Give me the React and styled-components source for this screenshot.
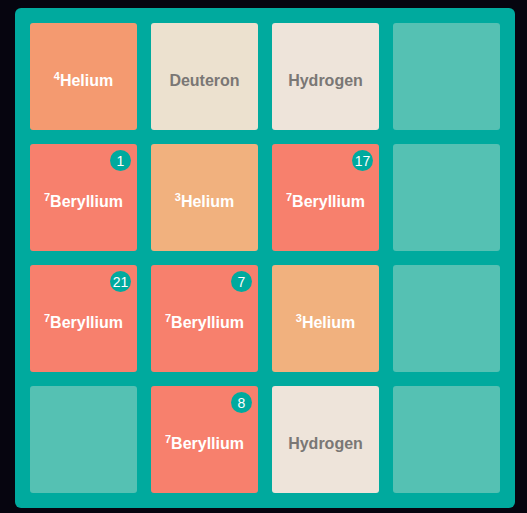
import React from 'react';
import styled, { createGlobalStyle } from 'styled-components';

const GlobalStyle = createGlobalStyle`
    html, body {
        margin: 0;
        padding: 0;
        height: 100%;
    }
    body {
        background-color: #06050f;
        background-image:
            radial-gradient(1px 1px at 20px 30px, #8c8ca8 50%, transparent 51%),
            radial-gradient(1px 1px at 75px 12px, #6f6f90 50%, transparent 51%),
            radial-gradient(1.5px 1.5px at 140px 70px, #aaaacc 50%, transparent 51%),
            radial-gradient(1px 1px at 190px 5px, #7a7a9a 50%, transparent 51%),
            radial-gradient(1px 1px at 10px 110px, #555577 50%, transparent 51%),
            radial-gradient(1px 1px at 105px 95px, #666688 50%, transparent 51%);
        background-size: 211px 127px;
        font-family: 'Liberation Sans', Arial, sans-serif;
    }
`;

const Page = styled.div`
    padding: 8px 0 0 15px;
`;

const Board = styled.div`
    width: 500px;
    height: 500px;
    box-sizing: border-box;
    padding: 15px;
    background: #00aa9e;
    border-radius: 6px;
    display: grid;
    grid-template-columns: repeat(4, 107px);
    grid-template-rows: repeat(4, 107px);
    gap: 14px;
`;

const palette = {
    empty: { bg: '#55c1b3', fg: 'transparent' },
    he4: { bg: '#f49a70', fg: '#ffffff' },
    he3: { bg: '#f1b17e', fg: '#ffffff' },
    be7: { bg: '#f7806d', fg: '#ffffff' },
    d: { bg: '#ece1cf', fg: '#7a7775' },
    h: { bg: '#eee4da', fg: '#7a7775' },
};

const Tile = styled.div`
    position: relative;
    border-radius: 3px;
    background: ${({ $kind }) => palette[$kind].bg};
    color: ${({ $kind }) => palette[$kind].fg};
    display: flex;
    align-items: center;
    justify-content: center;
    font-weight: bold;
    font-size: 16px;
    padding-top: 8px;
    box-sizing: border-box;
`;

const Sup = styled.sup`
    font-size: 11px;
    vertical-align: 6px;
    line-height: 0;
`;

const Badge = styled.span`
    position: absolute;
    top: 6px;
    right: 6px;
    width: 21px;
    height: 21px;
    border-radius: 50%;
    background: #00aa9e;
    color: #ffffff;
    font-size: 14px;
    font-weight: normal;
    display: flex;
    align-items: center;
    justify-content: center;
`;

const names = {
    he4: ['4', 'Helium'],
    he3: ['3', 'Helium'],
    be7: ['7', 'Beryllium'],
    d: [null, 'Deuteron'],
    h: [null, 'Hydrogen'],
};

const cells = [
    { kind: 'he4' }, { kind: 'd' }, { kind: 'h' }, { kind: 'empty' },
    { kind: 'be7', count: 1 }, { kind: 'he3' }, { kind: 'be7', count: 17 }, { kind: 'empty' },
    { kind: 'be7', count: 21 }, { kind: 'be7', count: 7 }, { kind: 'he3' }, { kind: 'empty' },
    { kind: 'empty' }, { kind: 'be7', count: 8 }, { kind: 'h' }, { kind: 'empty' },
];

function Cell({ kind, count }) {
    if (kind === 'empty') return <Tile $kind="empty" />;
    const [mass, label] = names[kind];
    return (
        <Tile $kind={kind}>
            {count != null && <Badge>{count}</Badge>}
            <span>
                {mass && <Sup>{mass}</Sup>}
                {label}
            </span>
        </Tile>
    );
}

export default function App() {
    return (
        <Page>
            <GlobalStyle />
            <Board>
                {cells.map((c, i) => (
                    <Cell key={i} {...c} />
                ))}
            </Board>
        </Page>
    );
}
